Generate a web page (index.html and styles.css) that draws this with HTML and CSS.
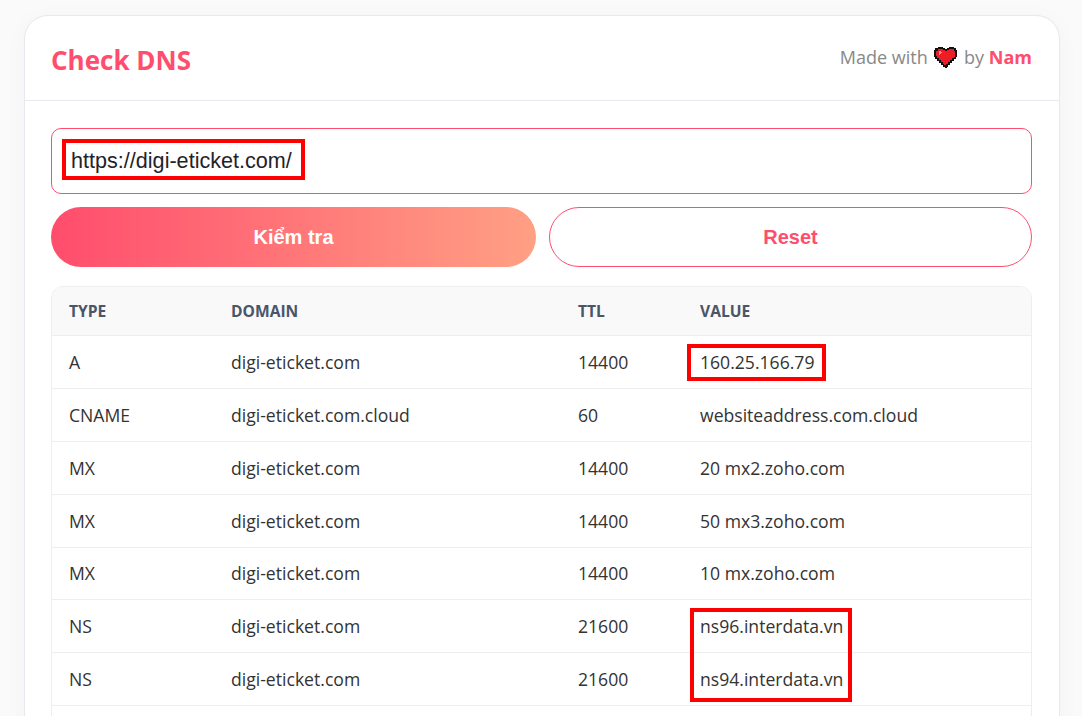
FILE: index.html
```html
<!DOCTYPE html>
<html lang="vi">
<head>
  <meta charset="UTF-8" />
  <meta name="viewport" content="width=device-width, initial-scale=1.0" />
  <title>Check DNS</title>
  <link rel="stylesheet" href="styles.css">
</head>
<body>
  <div class="card">
    <header class="card-header">
      <h1>Check DNS</h1>
      <p class="credit">Made with <svg class="heart" viewBox="0 0 24 21" width="24" height="21" shape-rendering="crispEdges">
          <path fill="#111" d="M4 0h5v1h2v1h2V1h2V0h5v1h2v2h1v7h-1v2h-2v2h-2v2h-2v2h-2v2h-1v1h-2v-1H9v-2H7v-2H5v-2H3v-2H1v-2H0V3h1V1h3z"/>
          <path fill="#ee1c25" d="M4 2h5v1h2v1h2V3h2V2h5v2h1v6h-1v1h-2v2h-2v2h-2v2h-2v1h-2v-1H9v-2H7v-2H5v-2H3v-2H2V4h2z"/>
          <path fill="#ff8a8a" d="M5 4h2v1h1v1H7v1H6v1H5z"/>
        </svg> by <strong>Nam</strong></p>
    </header>

    <main class="card-body">
      <input class="url-input" type="text" value="https://digi-eticket.com/" />
      <div class="actions">
        <button class="btn btn-primary">Kiểm tra</button>
        <button class="btn btn-outline">Reset</button>
      </div>

      <div class="table-wrap">
        <table>
          <colgroup>
            <col class="col-type"><col class="col-domain"><col class="col-ttl"><col>
          </colgroup>
          <thead>
            <tr><th>Type</th><th>Domain</th><th>TTL</th><th>Value</th></tr>
          </thead>
          <tbody>
            <tr><td>A</td><td>digi-eticket.com</td><td>14400</td><td>160.25.166.79</td></tr>
            <tr><td>CNAME</td><td>digi-eticket.com.cloud</td><td>60</td><td>websiteaddress.com.cloud</td></tr>
            <tr><td>MX</td><td>digi-eticket.com</td><td>14400</td><td>20 mx2.zoho.com</td></tr>
            <tr><td>MX</td><td>digi-eticket.com</td><td>14400</td><td>50 mx3.zoho.com</td></tr>
            <tr><td>MX</td><td>digi-eticket.com</td><td>14400</td><td>10 mx.zoho.com</td></tr>
            <tr><td>NS</td><td>digi-eticket.com</td><td>21600</td><td>ns96.interdata.vn</td></tr>
            <tr><td>NS</td><td>digi-eticket.com</td><td>21600</td><td>ns94.interdata.vn</td></tr>
            <tr><td></td><td></td><td></td><td></td></tr>
          </tbody>
        </table>
      </div>
    </main>

    <!-- red annotation boxes drawn over the screenshot -->
    <div class="mark mark-url"></div>
    <div class="mark mark-a"></div>
    <div class="mark mark-ns"></div>
  </div>
</body>
</html>
```

FILE: styles.css
```css
html, body {
  height: 716px;
  overflow: hidden;
}
body {
  margin: 0;
  padding: 15px 22px 0 24px;
  box-sizing: border-box;
  font-family: "Open Sans", "Noto Sans", sans-serif;
  background: #fafafa;
  color: #333;
}
.card {
  position: relative;
  background: #fff;
  border: 1px solid #e8e8ee;
  border-radius: 24px;
  box-shadow: 0 4px 24px rgba(0,0,0,0.03);
  height: 900px;
}
.card-header {
  display: flex;
  justify-content: space-between;
  align-items: center;
  height: 81px;
  padding: 3px 27px 0 26px;
  border-bottom: 1px solid #e8e8ee;
}
.card-header h1 {
  margin: 0;
  font-size: 26px;
  font-weight: 700;
  color: #ff4d6d;
}
.credit {
  margin: 0 0 6px;
  font-size: 18px;
  color: #888;
}
.credit strong {
  color: #ff4d6d;
  font-weight: 700;
}
.heart {
  vertical-align: -4px;
  margin: 0 1px 0 2px;
}
.card-body {
  padding: 27px 27px 0 26px;
}
.url-input {
  display: block;
  width: 100%;
  height: 66px;
  box-sizing: border-box;
  padding: 0 19px;
  border: 1px solid #ff4d6d;
  border-radius: 10px;
  font-family: "Liberation Sans", Arial, sans-serif;
  font-size: 21.6px;
  color: #1f2328;
  outline: none;
}
.actions {
  display: grid;
  grid-template-columns: 485px 483px;
  justify-content: space-between;
  margin-top: 13px;
}
.btn {
  height: 60px;
  border-radius: 30px;
  font-family: "Liberation Sans", Arial, sans-serif;
  font-size: 20px;
  font-weight: 700;
}
.btn-primary {
  border: none;
  color: #fff;
  background: linear-gradient(90deg, #ff4d6d, #ffa084);
}
.btn-outline {
  border: 1px solid #ff4d6d;
  color: #ff4d6d;
  background: #fff;
}
.table-wrap {
  margin-top: 19px;
  border: 1px solid #eeeeee;
  border-radius: 12px;
  overflow: hidden;
}
table {
  width: 100%;
  border-collapse: collapse;
  table-layout: fixed;
}
.col-type { width: 163px; }
.col-domain { width: 347px; }
.col-ttl { width: 122px; }
th, td {
  padding: 0 16px;
  box-sizing: border-box;
  border-bottom: 1px solid #eeeeee;
}
th:first-child, td:first-child {
  padding-left: 17px;
}
th {
  height: 48.5px;
  background: #f9f9f9;
  text-align: left;
  font-size: 15.6px;
  font-weight: 700;
  text-transform: uppercase;
  color: #4a5568;
}
td {
  height: 52.88px;
  font-size: 17.6px;
  color: #333;
}
.mark {
  position: absolute;
  box-sizing: border-box;
  border: 4px solid #ff0000;
}
.mark-url { left: 37px; top: 123px; width: 243px; height: 41px; }
.mark-a { left: 662px; top: 328px; width: 139px; height: 37px; }
.mark-ns { left: 665px; top: 592px; width: 162px; height: 94px; }
```
